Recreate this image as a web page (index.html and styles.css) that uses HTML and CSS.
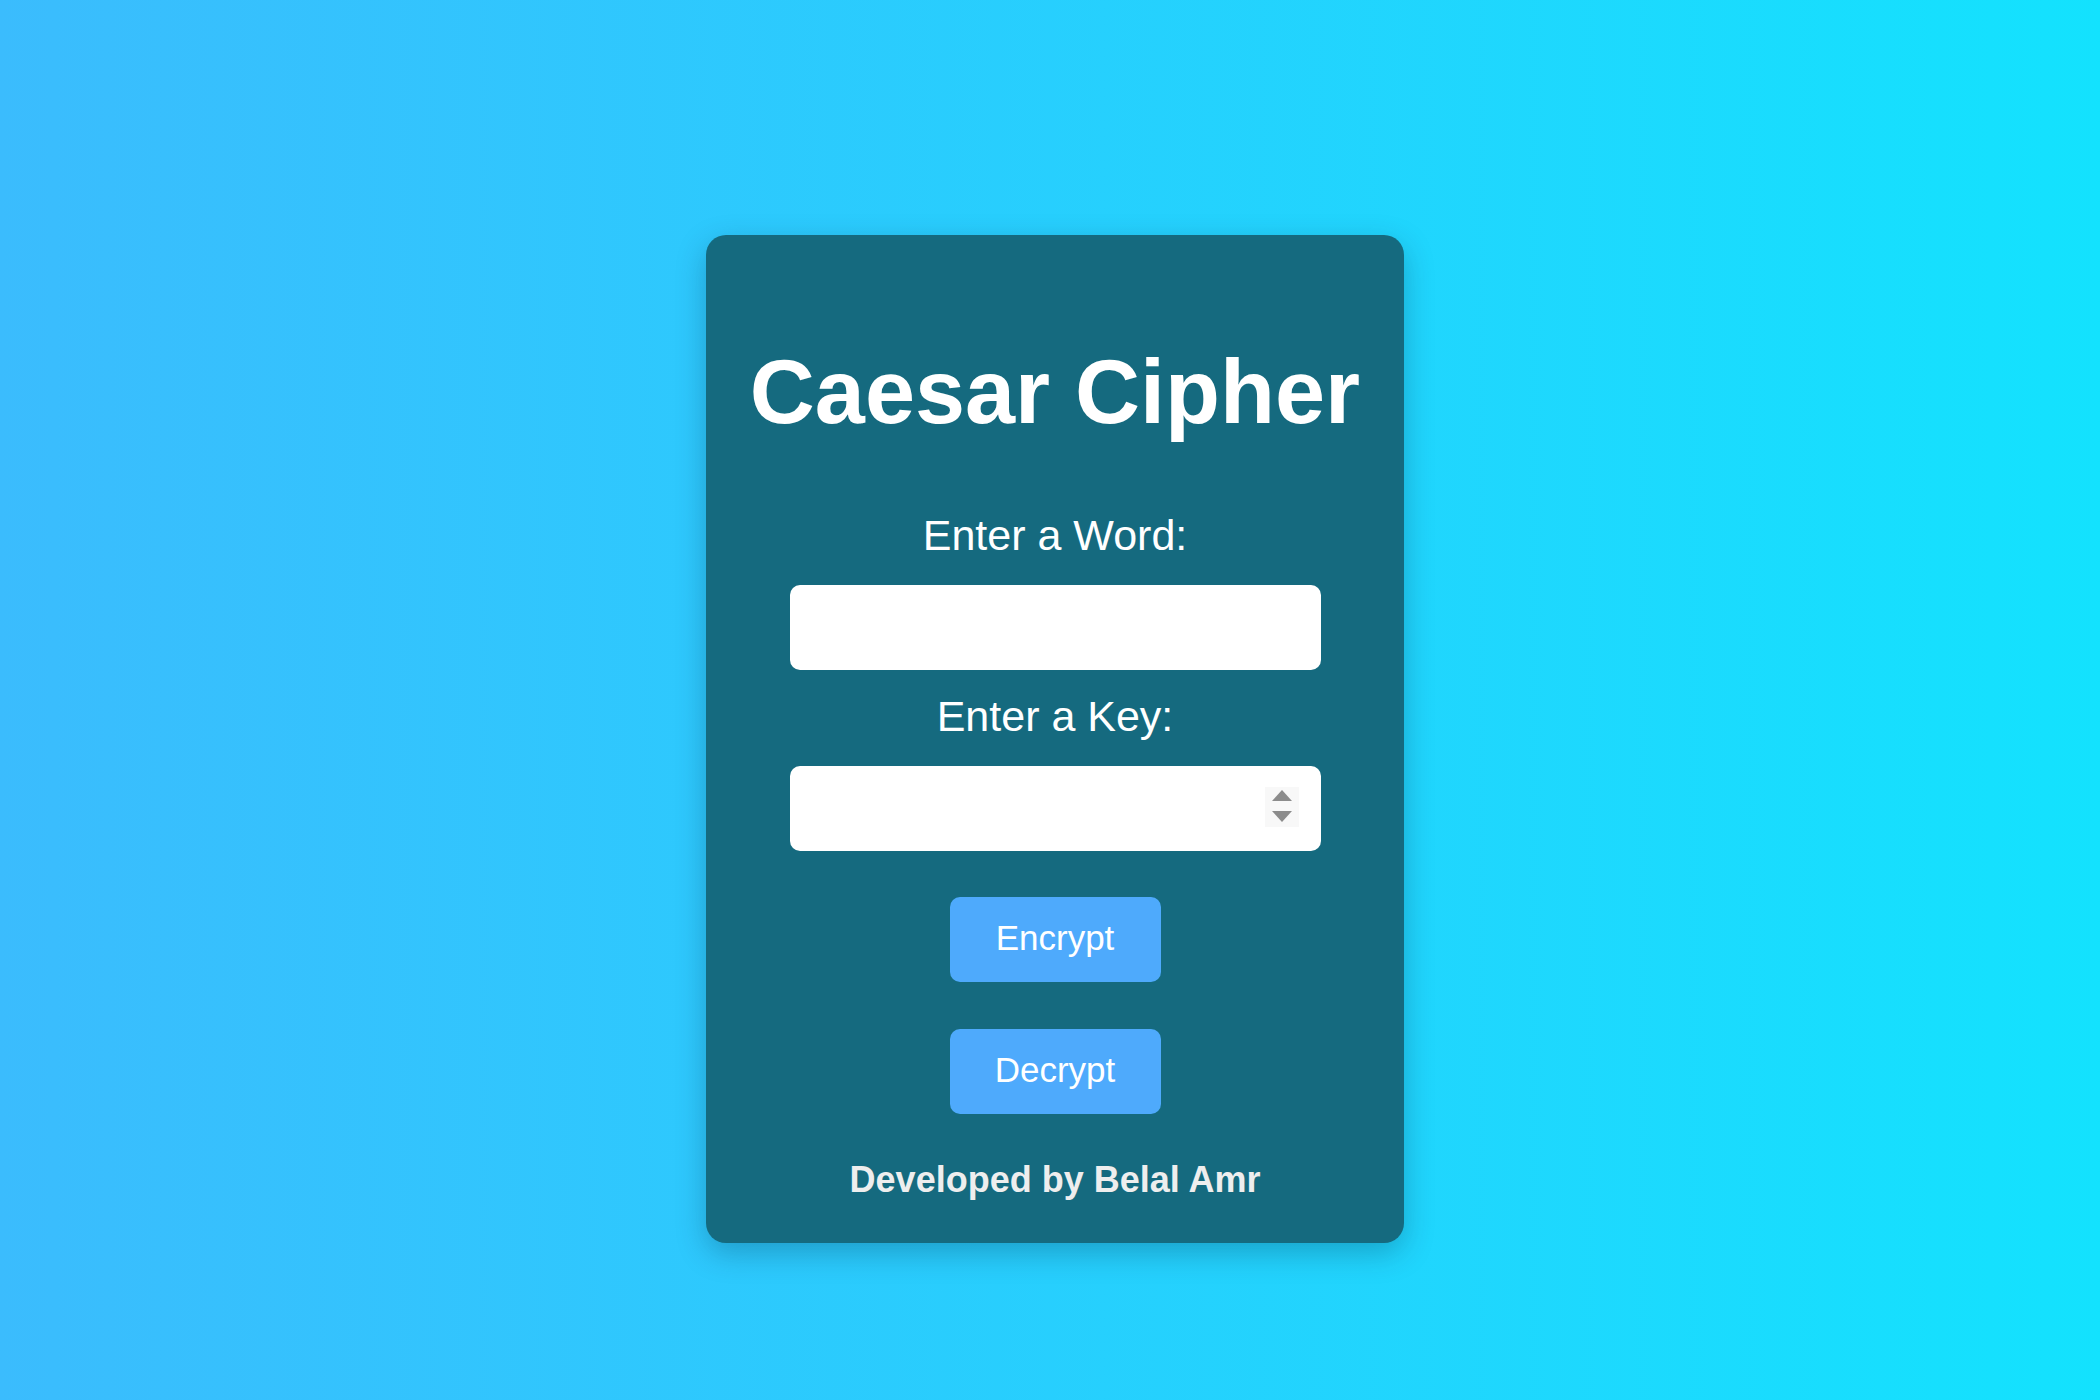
FILE: index.html
```html
<!DOCTYPE html>
<html lang="en">
<head>
<meta charset="utf-8">
<title>Caesar Cipher</title>
<link rel="stylesheet" href="styles.css">
</head>
<body>
  <main class="card">
    <h1 class="title">Caesar Cipher</h1>
    <label class="label" for="word">Enter a Word:</label>
    <input class="field" id="word" type="text">
    <label class="label" for="key">Enter a Key:</label>
    <div class="field-wrap">
      <input class="field field-number" id="key" type="number">
      <span class="spinner" aria-hidden="true">
        <svg width="24" height="40" viewBox="0 0 24 40">
          <path d="M2 14 L12 3 L22 14 Z" fill="#8c8c8c"/>
          <path d="M2 24 L22 24 L12 35 Z" fill="#8c8c8c"/>
        </svg>
      </span>
    </div>
    <button class="btn btn-first" type="button">Encrypt</button>
    <button class="btn btn-second" type="button">Decrypt</button>
    <p class="credit">Developed by Belal Amr</p>
  </main>
</body>
</html>
```

FILE: styles.css
```css
html, body {
  margin: 0;
  padding: 0;
}

body {
  min-height: 1400px;
  box-sizing: border-box;
  background: linear-gradient(to right, #3bbcfd 0%, #13e2fe 100%);
  font-family: "Liberation Sans", Arial, Helvetica, sans-serif;
  display: flex;
  flex-direction: column;
  align-items: center;
  padding-top: 235px;
  padding-left: 10px;
}

.card {
  width: 698px;
  box-sizing: border-box;
  background: #156a7f;
  border-radius: 20px;
  box-shadow: 0 10px 30px rgba(0, 40, 70, 0.28);
  padding: 112px 0 45px;
  display: flex;
  flex-direction: column;
  align-items: center;
  text-align: center;
}

.title {
  margin: 0;
  font-size: 90px;
  line-height: 91px;
  font-weight: 700;
  color: #ffffff;
}

.label {
  display: block;
  font-size: 43px;
  line-height: 43px;
  color: #ffffff;
  margin-bottom: 28px;
}

.title + .label {
  margin-top: 76px;
}

.field {
  display: block;
  width: 531px;
  height: 85px;
  box-sizing: border-box;
  border: none;
  border-radius: 10px;
  background: #ffffff;
  padding: 0 20px;
  font-family: inherit;
  font-size: 34px;
  margin: 0 0 25px;
  outline: none;
}

.field-wrap {
  position: relative;
  width: 531px;
  height: 85px;
}

.field-number {
  margin: 0;
  -moz-appearance: textfield;
  appearance: textfield;
}

.field-number::-webkit-outer-spin-button,
.field-number::-webkit-inner-spin-button {
  -webkit-appearance: none;
  margin: 0;
}

.spinner {
  position: absolute;
  top: 21px;
  right: 22px;
  width: 34px;
  height: 40px;
  background: #f8f8f8;
  display: flex;
  align-items: center;
  justify-content: center;
}

.btn {
  display: block;
  width: 211px;
  height: 85px;
  border: none;
  border-radius: 10px;
  background: #4eaafc;
  color: #ffffff;
  font-family: inherit;
  font-size: 35px;
  padding: 0 0 4px;
  cursor: pointer;
}

.btn-first {
  margin-top: 46px;
}

.btn-second {
  margin-top: 47px;
}

.credit {
  margin: 48px 0 0;
  font-size: 36px;
  line-height: 36px;
  font-weight: 700;
  color: #eeeeee;
}
```
